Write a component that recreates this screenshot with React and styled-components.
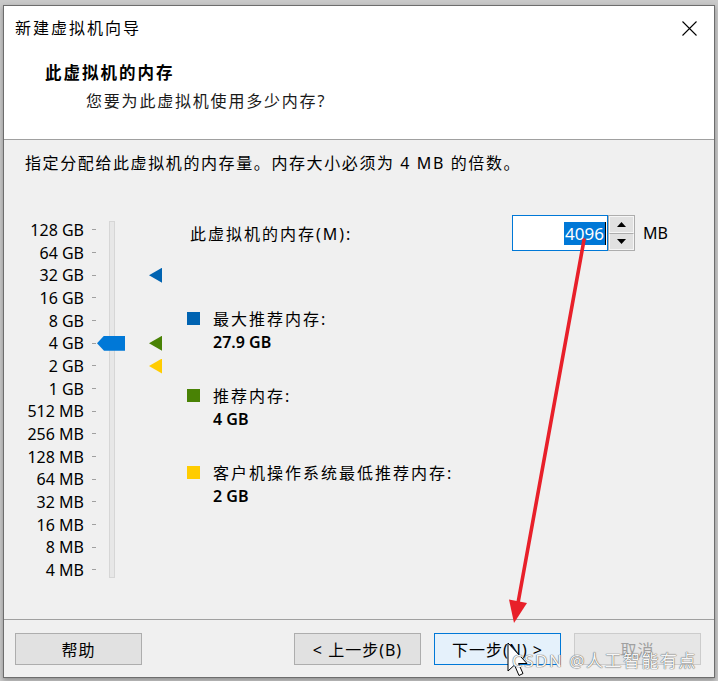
import React from "react";
import styled, { createGlobalStyle } from "styled-components";

const GlobalStyle = createGlobalStyle`
  html, body {
    margin: 0;
    padding: 0;
    background: #c9c9c9;
  }
  body {
    font-family: "Noto Sans", "Noto Sans CJK SC", sans-serif;
    color: #000000;
  }
`;

const ROW_H = 22.67;

const scaleLabels = [
  "128 GB",
  "64 GB",
  "32 GB",
  "16 GB",
  "8 GB",
  "4 GB",
  "2 GB",
  "1 GB",
  "512 MB",
  "256 MB",
  "128 MB",
  "64 MB",
  "32 MB",
  "16 MB",
  "8 MB",
  "4 MB",
];

const markers = [
  { row: 2, color: "#0063b1" },
  { row: 5, color: "#498205" },
  { row: 6, color: "#ffcc00" },
];

const legend = [
  { color: "#0063b1", title: "最大推荐内存:", value: "27.9 GB" },
  { color: "#498205", title: "推荐内存:", value: "4 GB" },
  { color: "#ffcc00", title: "客户机操作系统最低推荐内存:", value: "2 GB" },
];

function App() {
  return (
    <>
      <GlobalStyle />
      <Page>
        <Window>
          <Header>
            <TitleRow>
              <WindowTitle>新建虚拟机向导</WindowTitle>
              <CloseIcon width="15" height="15" viewBox="0 0 15 15">
                <path d="M0.5 0.5 L14.5 14.5 M14.5 0.5 L0.5 14.5" stroke="#000" strokeWidth="1.1" />
              </CloseIcon>
            </TitleRow>
            <PageHeading>此虚拟机的内存</PageHeading>
            <PageSubtitle>您要为此虚拟机使用多少内存?</PageSubtitle>
          </Header>
          <Body>
            <Description>指定分配给此虚拟机的内存量。内存大小必须为 4 MB 的倍数。</Description>
            <Main>
              <Scale>
                <ScaleLabels>
                  {scaleLabels.map((label) => (
                    <ScaleRow key={label}>
                      <ScaleText>{label}</ScaleText>
                      <Tick />
                    </ScaleRow>
                  ))}
                </ScaleLabels>
                <Track>
                  <Thumb $row={5} />
                </Track>
                <MarkerColumn>
                  {markers.map((m) => (
                    <Marker key={m.row} $row={m.row} $color={m.color} />
                  ))}
                </MarkerColumn>
              </Scale>
              <RightPanel>
                <MemoryRow>
                  <MemoryLabel>此虚拟机的内存(M):</MemoryLabel>
                  <NumberBox>
                    <Selected>4096</Selected>
                    <Caret />
                  </NumberBox>
                  <Spinner>
                    <SpinButton>
                      <svg width="9" height="5" viewBox="0 0 9 5">
                        <path d="M0 5 L4.5 0 L9 5 Z" fill="#000" />
                      </svg>
                    </SpinButton>
                    <SpinButton>
                      <svg width="9" height="5" viewBox="0 0 9 5">
                        <path d="M0 0 L9 0 L4.5 5 Z" fill="#000" />
                      </svg>
                    </SpinButton>
                  </Spinner>
                  <Unit>MB</Unit>
                </MemoryRow>
                <LegendList>
                  {legend.map((item) => (
                    <LegendItem key={item.title}>
                      <LegendHead>
                        <Swatch $color={item.color} />
                        <LegendTitle>{item.title}</LegendTitle>
                      </LegendHead>
                      <LegendValue>{item.value}</LegendValue>
                    </LegendItem>
                  ))}
                </LegendList>
              </RightPanel>
            </Main>
          </Body>
          <ButtonBar>
            <Button>帮助</Button>
            <ButtonGroup>
              <Button>&lt; 上一步(B)</Button>
              <Button $primary>下一步(N) &gt;</Button>
              <Button $disabled>取消</Button>
            </ButtonGroup>
          </ButtonBar>
        </Window>

        <Overlay width="718" height="681" viewBox="0 0 718 681">
          <line x1="584" y1="240" x2="518" y2="603" stroke="#e8202a" strokeWidth="3.6" strokeLinecap="round" />
          <path d="M514 623 L509 599.5 L527 603 Z" fill="#e8202a" />
          <path
            d="M508 643 L508 671 L514.5 665 L519 675.5 L523 673.5 L518.5 663.5 L527 663.5 Z"
            fill="#ffffff"
            stroke="#000000"
            strokeWidth="1"
            strokeLinejoin="round"
          />
        </Overlay>
        <Watermark>CSDN @人工智能有点</Watermark>
      </Page>
    </>
  );
}

const Page = styled.div`
  position: relative;
  width: 718px;
  height: 681px;
  padding: 5px 0 0 3px;
  box-sizing: border-box;
  overflow: hidden;
`;

const Window = styled.div`
  width: 712px;
  height: 673px;
  box-sizing: border-box;
  border: 1px solid #6d6d6d;
  background: #f0f0f0;
  display: flex;
  flex-direction: column;
  box-shadow: 0 2px 5px rgba(0, 0, 0, 0.3);
`;

const Header = styled.div`
  height: 134px;
  box-sizing: border-box;
  flex: 0 0 auto;
  background: #ffffff;
  border-bottom: 1px solid #a0a0a0;
  padding: 11px 0 0 11px;
`;

const TitleRow = styled.div`
  display: flex;
  align-items: center;
  justify-content: space-between;
  padding-right: 17px;
  height: 22px;
`;

const WindowTitle = styled.div`
  font-size: 16px;
  line-height: 22px;
  letter-spacing: 2px;
`;

const CloseIcon = styled.svg`
  display: block;
`;

const PageHeading = styled.div`
  margin: 22px 0 0 30px;
  font-size: 16.5px;
  font-weight: 700;
  line-height: 24px;
  letter-spacing: 2px;
`;

const PageSubtitle = styled.div`
  margin: 4px 0 0 71px;
  font-size: 16px;
  line-height: 24px;
  letter-spacing: 1.8px;
  color: #1a1a1a;
`;

const Body = styled.div`
  flex: 1;
  padding: 11px 0 0 21px;
  border-bottom: 1px solid #a0a0a0;
`;

const Description = styled.div`
  font-size: 16px;
  line-height: 24px;
  letter-spacing: 1.6px;
`;

const Main = styled.div`
  display: flex;
  align-items: flex-start;
  margin-top: 40px;
`;

const Scale = styled.div`
  display: flex;
  align-items: flex-start;
  margin-top: 3.67px;
  margin-left: -1px;
`;

const ScaleLabels = styled.div`
  display: flex;
  flex-direction: column;
`;

const ScaleRow = styled.div`
  display: flex;
  align-items: center;
  height: ${ROW_H}px;
`;

const ScaleText = styled.span`
  width: 60px;
  text-align: right;
  font-size: 16px;
  white-space: nowrap;
`;

const Tick = styled.span`
  width: 4px;
  height: 1px;
  margin-left: 8px;
  background: #a0a0a0;
`;

const Track = styled.div`
  position: relative;
  width: 6px;
  height: 357px;
  margin: 2.33px 0 0 13px;
  box-sizing: border-box;
  border: 1px solid #d6d6d6;
  background: #e7e7e7;
`;

const Thumb = styled.div`
  position: absolute;
  left: -13px;
  top: ${(p) => (p.$row + 0.5) * ROW_H - 2.33 - 7.5 - 1}px;
  width: 28px;
  height: 15px;
  background: #0078d7;
  clip-path: polygon(0 50%, 25% 0, 100% 0, 100% 100%, 25% 100%);
`;

const MarkerColumn = styled.div`
  position: relative;
  width: 14px;
  height: ${ROW_H * 16}px;
  margin-left: 34px;
`;

const Marker = styled.div`
  position: absolute;
  left: 0;
  top: ${(p) => (p.$row + 0.5) * ROW_H - 7.5}px;
  width: 13px;
  height: 15px;
  background: ${(p) => p.$color};
  clip-path: polygon(0 50%, 100% 0, 100% 100%);
`;

const RightPanel = styled.div`
  display: flex;
  flex-direction: column;
  margin-left: 24px;
`;

const MemoryRow = styled.div`
  display: flex;
  align-items: center;
  height: 36px;
  padding-left: 3px;
`;

const MemoryLabel = styled.span`
  flex: 0 0 322px;
  font-size: 16px;
  letter-spacing: 2px;
`;

const NumberBox = styled.div`
  width: 96px;
  height: 36px;
  box-sizing: border-box;
  border: 1px solid #0078d7;
  background: #ffffff;
  display: flex;
  align-items: center;
  justify-content: flex-end;
  padding-right: 1px;
`;

const Selected = styled.span`
  background: #0078d7;
  color: #ffffff;
  font-size: 17px;
  line-height: 23px;
  padding: 0 1px;
`;

const Caret = styled.span`
  width: 1px;
  height: 23px;
  background: #000000;
`;

const Spinner = styled.div`
  display: flex;
  flex-direction: column;
  width: 27px;
  height: 36px;
  box-sizing: border-box;
  border: 1px solid #adadad;
  background: #e1e1e1;
`;

const SpinButton = styled.div`
  flex: 1;
  display: flex;
  align-items: center;
  justify-content: center;
  border: 1px solid #f6f6f6;
  & + & {
    border-top: 1px solid #adadad;
  }
`;

const Unit = styled.span`
  margin-left: 8px;
  font-size: 16px;
`;

const LegendList = styled.div`
  display: flex;
  flex-direction: column;
  gap: 29px;
  margin-top: 55px;
`;

const LegendItem = styled.div`
  display: flex;
  flex-direction: column;
`;

const LegendHead = styled.div`
  display: flex;
  align-items: center;
  height: 24px;
`;

const Swatch = styled.span`
  width: 13px;
  height: 13px;
  background: ${(p) => p.$color};
  margin-right: 13px;
`;

const LegendTitle = styled.span`
  font-size: 16px;
  letter-spacing: 2px;
`;

const LegendValue = styled.div`
  padding-left: 26px;
  font-size: 16px;
  font-weight: 600;
  line-height: 24px;
`;

const ButtonBar = styled.div`
  display: flex;
  justify-content: space-between;
  padding: 13px 13px 12px 11px;
  flex: 0 0 auto;
`;

const ButtonGroup = styled.div`
  display: flex;
  gap: 13px;
`;

const Button = styled.button`
  width: 127px;
  height: 32px;
  box-sizing: border-box;
  border: 1px solid ${(p) => (p.$primary ? "#0078d7" : p.$disabled ? "#cccccc" : "#adadad")};
  background: ${(p) => (p.$primary ? "#e5f1fb" : p.$disabled ? "#e6e6e6" : "#e1e1e1")};
  color: ${(p) => (p.$disabled ? "#a0a0a0" : "#000000")};
  font-family: "Noto Sans", "Noto Sans CJK SC", sans-serif;
  font-size: 16px;
  letter-spacing: 1px;
  padding: 0;
`;

const Overlay = styled.svg`
  position: absolute;
  left: 0;
  top: 0;
  pointer-events: none;
`;

const Watermark = styled.div`
  position: absolute;
  left: 512px;
  top: 649px;
  font-size: 17px;
  line-height: 24px;
  letter-spacing: 1.5px;
  color: #f6f6f6;
  text-shadow: 0 0 1px #555555, 0 0 1px #555555;
  white-space: nowrap;
  pointer-events: none;
`;

export default App;
